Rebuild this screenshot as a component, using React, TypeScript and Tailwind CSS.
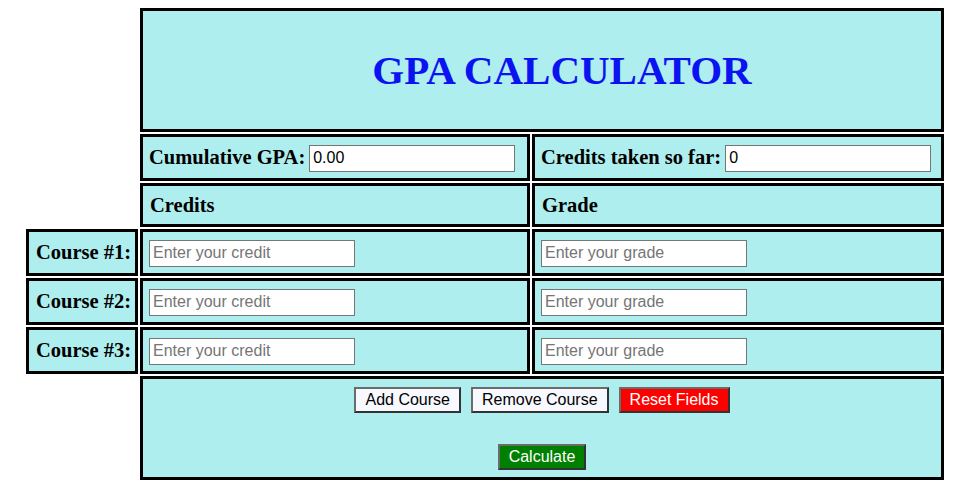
import React from 'react';

const cell = 'border-[3px] border-black bg-[#afeeee]';
const label = 'font-["Liberation_Serif",serif] font-bold text-[20.5px] text-black';
const input =
  'w-[206px] h-[27px] border border-[#767676] bg-white px-[3px] font-["Liberation_Sans",sans-serif] text-[16px] text-black placeholder:text-[#757575] outline-none';
const btn =
  'h-[26px] px-[9px] border-2 border-t-[#6b6b6b] border-l-[#6b6b6b] border-b-[#333] border-r-[#333] font-["Liberation_Sans",sans-serif] text-[16px] leading-none';

export default function App() {
  const courses = [1, 2, 3];
  return (
    <div className="bg-white min-h-screen pt-[8px] pl-[26px]">
      <div className="grid grid-cols-[112px_390px_412px] gap-[2px] w-[918px]">
        {/* header */}
        <div />
        <div className={`${cell} col-span-2 h-[124px] flex items-center justify-center pl-[40px]`}>
          <h1 className='font-["Liberation_Serif",serif] font-bold text-[41px] text-[#0b14f0] leading-none mt-[0px]'>
            GPA CALCULATOR
          </h1>
        </div>

        {/* totals */}
        <div />
        <div className={`${cell} h-[47px] flex items-center pl-[6px]`}>
          <span className={label}>Cumulative GPA:</span>
          <input className={`${input} ml-[4px] mt-[1px]`} defaultValue="0.00" />
        </div>
        <div className={`${cell} h-[47px] flex items-center pl-[6px]`}>
          <span className={label}>Credits taken so far:</span>
          <input className={`${input} ml-[4px] mt-[1px]`} defaultValue="0" />
        </div>

        {/* column heads */}
        <div />
        <div className={`${cell} h-[44px] flex items-center pl-[7px]`}>
          <span className={label}>Credits</span>
        </div>
        <div className={`${cell} h-[44px] flex items-center pl-[7px]`}>
          <span className={label}>Grade</span>
        </div>

        {courses.map((n) => (
          <React.Fragment key={n}>
            <div className={`${cell} h-[47px] flex items-center pl-[7px]`}>
              <span className={label}>Course #{n}:</span>
            </div>
            <div className={`${cell} h-[47px] flex items-center pl-[6px]`}>
              <input className={`${input} mt-[1px]`} placeholder="Enter your credit" />
            </div>
            <div className={`${cell} h-[47px] flex items-center pl-[6px]`}>
              <input className={`${input} mt-[1px]`} placeholder="Enter your grade" />
            </div>
          </React.Fragment>
        ))}

        {/* actions */}
        <div />
        <div className={`${cell} col-span-2 h-[104px] flex flex-col items-center pt-[8px]`}>
          <div className="flex gap-[10px]">
            <button className={`${btn} bg-[#f8f8ff] text-black`}>Add Course</button>
            <button className={`${btn} bg-[#f8f8ff] text-black`}>Remove Course</button>
            <button className={`${btn} bg-[#ff0000] text-white`}>Reset Fields</button>
          </div>
          <button className={`${btn} bg-[#008000] text-white mt-[31px]`}>Calculate</button>
        </div>
      </div>
    </div>
  );
}
